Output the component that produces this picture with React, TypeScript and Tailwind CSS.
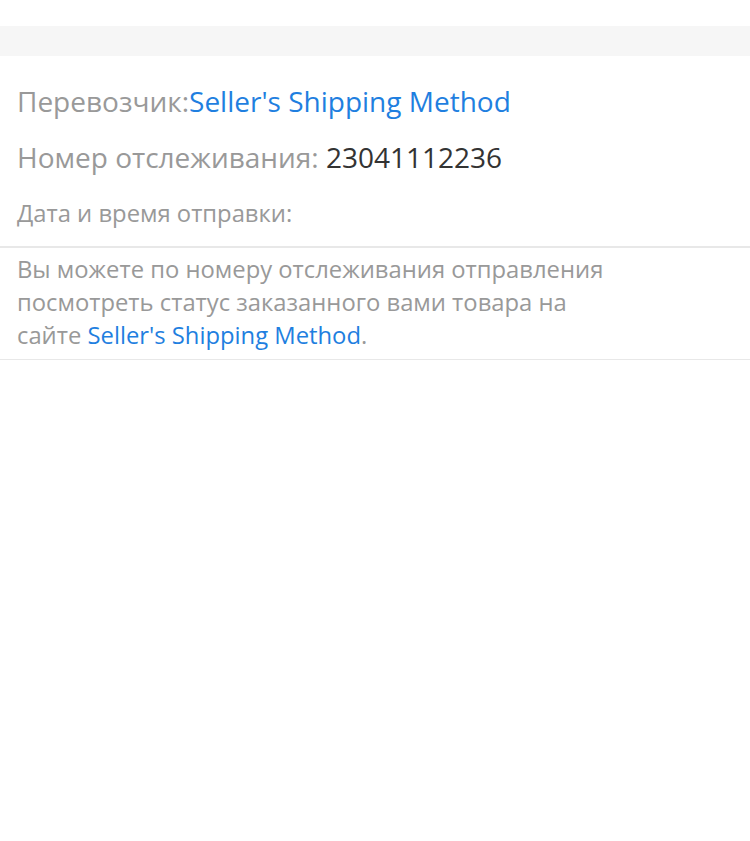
import React from 'react';

const App: React.FC = () => {
  return (
    <div className="min-h-screen bg-white" style={{ fontFamily: '"Open Sans", "Noto Sans", sans-serif' }}>
      {/* верхняя полоса */}
      <div className="h-[26px] bg-white" />
      <div className="h-[30px] bg-[#f6f6f6]" />

      {/* информация о доставке */}
      <div className="px-[17px] pt-[27px]">
        <p className="text-[28px] leading-[36px] text-[#999999]">
          Перевозчик:<span className="text-[#1f7fe0]">Seller's Shipping Method</span>
        </p>
        <p className="mt-[20px] text-[28px] leading-[36px] text-[#999999]">
          Номер отслеживания: <span className="text-[#333333]">23041112236</span>
        </p>
        <p className="mt-[23px] pb-[18px] text-[23.8px] leading-[30px] text-[#999999]">Дата и время отправки:</p>
      </div>

      <div className="border-t-2 border-b border-[#e8e8e8] px-[17px] pt-[5px] pb-[7px]">
        <p className="max-w-[600px] text-[23.8px] leading-[33px] text-[#999999]">
          Вы можете по номеру отслеживания отправления посмотреть статус заказанного вами товара на сайте{' '}
          <span className="text-[#1f7fe0]">Seller's Shipping Method</span>.
        </p>
      </div>
    </div>
  );
};

export default App;
